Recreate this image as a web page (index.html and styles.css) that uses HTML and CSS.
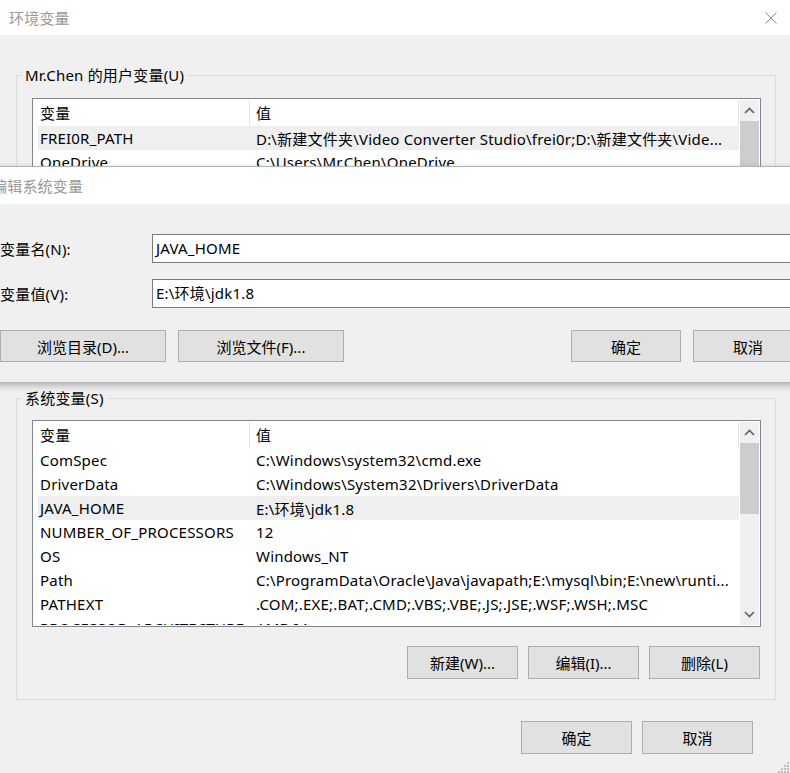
FILE: index.html
```html
<!DOCTYPE html>
<html lang="zh-CN">
<head>
<meta charset="utf-8">
<title>环境变量</title>
<link rel="stylesheet" href="styles.css">
</head>
<body>
<div class="window">
  <div class="titlebar">
    <span class="title">环境变量</span>
    <svg class="close" width="12" height="12" viewBox="0 0 12 12"><path d="M0.5 0.5L11.5 11.5M11.5 0.5L0.5 11.5"/></svg>
  </div>
  <div class="content">
    <div class="group group-user">
      <div class="legend">Mr.Chen 的用户变量(U)</div>
      <div class="list list-user">
        <div class="rows">
          <div class="row head"><span class="col-name">变量</span><span class="col-value">值</span></div>
          <div class="row selected"><span class="col-name">FREI0R_PATH</span><span class="col-value">D:\新建文件夹\Video Converter Studio\frei0r;D:\新建文件夹\Vide...</span></div>
          <div class="row"><span class="col-name">OneDrive</span><span class="col-value">C:\Users\Mr.Chen\OneDrive</span></div>
          <div class="row"><span class="col-name">Path</span><span class="col-value">C:\Users\Mr.Chen\AppData\Local\Microsoft\WindowsApps;</span></div>
          <div class="row"><span class="col-name">TEMP</span><span class="col-value">C:\Users\Mr.Chen\AppData\Local\Temp</span></div>
          <div class="row"><span class="col-name">TMP</span><span class="col-value">C:\Users\Mr.Chen\AppData\Local\Temp</span></div>
        </div>
        <div class="scrollbar">
          <svg class="arrow" width="19" height="21" viewBox="0 0 19 21"><path d="M5 13L9.5 8.5L14 13"/></svg>
          <div class="track"><div class="thumb thumb-user"></div></div>
          <svg class="arrow" width="19" height="21" viewBox="0 0 19 21"><path d="M5 8L9.5 12.5L14 8"/></svg>
        </div>
      </div>
    </div>

    <div class="group group-system">
      <div class="legend">系统变量(S)</div>
      <div class="list list-system">
        <div class="rows">
          <div class="row head"><span class="col-name">变量</span><span class="col-value">值</span></div>
          <div class="row"><span class="col-name">ComSpec</span><span class="col-value">C:\Windows\system32\cmd.exe</span></div>
          <div class="row"><span class="col-name">DriverData</span><span class="col-value">C:\Windows\System32\Drivers\DriverData</span></div>
          <div class="row selected"><span class="col-name">JAVA_HOME</span><span class="col-value">E:\环境\jdk1.8</span></div>
          <div class="row"><span class="col-name">NUMBER_OF_PROCESSORS</span><span class="col-value">12</span></div>
          <div class="row"><span class="col-name">OS</span><span class="col-value">Windows_NT</span></div>
          <div class="row"><span class="col-name">Path</span><span class="col-value">C:\ProgramData\Oracle\Java\javapath;E:\mysql\bin;E:\new\runti...</span></div>
          <div class="row"><span class="col-name">PATHEXT</span><span class="col-value">.COM;.EXE;.BAT;.CMD;.VBS;.VBE;.JS;.JSE;.WSF;.WSH;.MSC</span></div>
          <div class="row"><span class="col-name">PROCESSOR_ARCHITECTURE</span><span class="col-value">AMD64</span></div>
        </div>
        <div class="scrollbar">
          <svg class="arrow" width="19" height="21" viewBox="0 0 19 21"><path d="M5 13L9.5 8.5L14 13"/></svg>
          <div class="track"><div class="thumb thumb-system"></div></div>
          <svg class="arrow" width="19" height="21" viewBox="0 0 19 21"><path d="M5 8L9.5 12.5L14 8"/></svg>
        </div>
      </div>
      <div class="buttons">
        <button class="btn">新建(W)...</button>
        <button class="btn">编辑(I)...</button>
        <button class="btn">删除(L)</button>
      </div>
    </div>

    <div class="buttons footer">
      <button class="btn">确定</button>
      <button class="btn">取消</button>
    </div>
  </div>
  <svg class="grip" width="12" height="12" viewBox="0 0 12 12">
    <rect x="9" y="1" width="2" height="2"/>
    <rect x="6" y="4" width="2" height="2"/><rect x="9" y="4" width="2" height="2"/>
    <rect x="3" y="7" width="2" height="2"/><rect x="6" y="7" width="2" height="2"/><rect x="9" y="7" width="2" height="2"/>
    <rect x="0" y="10" width="2" height="2"/><rect x="3" y="10" width="2" height="2"/><rect x="6" y="10" width="2" height="2"/><rect x="9" y="10" width="2" height="2"/>
  </svg>

  <!-- the edit dialog sits on top of the main window -->
  <div class="dialog">
    <div class="dialog-titlebar"><span class="title">编辑系统变量</span></div>
    <div class="dialog-body">
      <div class="field">
        <label class="field-label">变量名(N):</label>
        <div class="input">JAVA_HOME</div>
      </div>
      <div class="field">
        <label class="field-label">变量值(V):</label>
        <div class="input">E:\环境\jdk1.8</div>
      </div>
      <div class="dialog-buttons">
        <div class="browse">
          <button class="btn btn-wide">浏览目录(D)...</button>
          <button class="btn btn-wide">浏览文件(F)...</button>
        </div>
        <div class="confirm">
          <button class="btn">确定</button>
          <button class="btn">取消</button>
        </div>
      </div>
    </div>
  </div>
</div>
</body>
</html>
```

FILE: styles.css
```css
html, body {
    margin: 0;
    padding: 0;
    overflow: hidden;
}

body {
    font-family: "Noto Sans", "Noto Sans CJK SC", sans-serif;
    font-size: 15px;
    letter-spacing: 0.2px;
    color: #000;
    background: #f0f0f0;
}

.window {
    position: relative;
    width: 790px;
    height: 773px;
    background: #f0f0f0;
    overflow: hidden;
}

.titlebar {
    height: 35px;
    background: #fff;
    display: flex;
    align-items: center;
    justify-content: space-between;
    padding: 0 13px 0 9px;
}

.title {
    color: #999;
    line-height: 20px;
}

.close path {
    stroke: #8c8c8c;
    stroke-width: 1;
    fill: none;
}

.content {
    padding: 0 14px 0 16px;
}

.group {
    border: 1px solid #dcdcdc;
    padding: 0 14px 0 15px;
}

.group-user {
    margin-top: 40px;
    padding-bottom: 16px;
}

.group-system {
    margin-top: 28px;
    padding-bottom: 20px;
}

.legend {
    display: block;
    width: max-content;
    margin: -11px 0 0 -10px;
    padding: 0 3px;
    line-height: 20px;
    background: #f0f0f0;
}

.list {
    display: flex;
    border: 1px solid #828790;
    background: #fff;
    padding: 1px 1px 1px 5px;
    overflow: hidden;
}

.list-user {
    margin-top: 13px;
    height: 251px;
}

.list-system {
    margin-top: 12px;
    height: 203px;
}

.rows {
    flex: 1;
    overflow: hidden;
    margin-top: -1px;
}

.row {
    display: flex;
    height: 24px;
    align-items: center;
    white-space: nowrap;
}

.row.head {
    height: 27px;
    padding-top: 1px;
    box-sizing: border-box;
}

.row.selected {
    background: #efefef;
}

.col-name {
    width: 212px;
    flex: none;
    padding-left: 2px;
    box-sizing: border-box;
}

.col-value {
    padding-left: 6px;
}

.head .col-name {
    border-right: 1px solid #e5e5e5;
    height: 26px;
    line-height: 26px;
}

.head .col-value {
    flex: 1;
    height: 26px;
    line-height: 26px;
    border-right: 1px solid #e5e5e5;
}

.scrollbar {
    width: 19px;
    margin-left: 1px;
    display: flex;
    flex-direction: column;
    background: #f0f0f0;
}

.arrow {
    display: block;
    flex: none;
}

.arrow path {
    stroke: #606060;
    stroke-width: 1.6;
    fill: none;
}

.track {
    flex: 1;
}

.thumb {
    background: #cdcdcd;
}

.thumb-user {
    height: 120px;
}

.thumb-system {
    height: 71px;
}

.buttons {
    display: flex;
    justify-content: flex-end;
    gap: 10px;
    margin-top: 19px;
    padding-right: 1px;
}

.footer {
    margin-top: 21px;
    padding-right: 23px;
}

.btn {
    width: 111px;
    height: 33px;
    background: #e1e1e1;
    border: 1px solid #adadad;
    font: inherit;
    color: #000;
    padding: 0;
}

.grip {
    position: absolute;
    right: 0;
    bottom: 0;
}

.grip rect {
    fill: #bcbcbc;
}

/* edit dialog */
.dialog {
    position: absolute;
    left: -13px;
    top: 166px;
    width: 830px;
    background: #f0f0f0;
    border-top: 1px solid #b4b4b4;
    box-shadow: 0 3px 7px rgba(0, 0, 0, 0.3);
}

.dialog-titlebar {
    height: 37px;
    background: #fff;
    display: flex;
    align-items: center;
    padding-left: 5px;
}

.dialog-body {
    padding: 30px 14px 20px 13px;
}

.field {
    display: grid;
    grid-template-columns: 152px 1fr;
    align-items: center;
    margin-bottom: 16px;
}

.input {
    height: 27px;
    line-height: 27px;
    border: 1px solid #7a7a7a;
    background: #fff;
    padding-left: 3px;
    margin-right: -10px;
}

.dialog-buttons {
    display: flex;
    justify-content: space-between;
    margin-top: 22px;
}

.browse, .confirm {
    display: flex;
    gap: 12px;
}

.btn-wide {
    width: 166px;
}

.dialog-buttons .btn {
    height: 32px;
}

.confirm .btn {
    width: 110px;
}
```
